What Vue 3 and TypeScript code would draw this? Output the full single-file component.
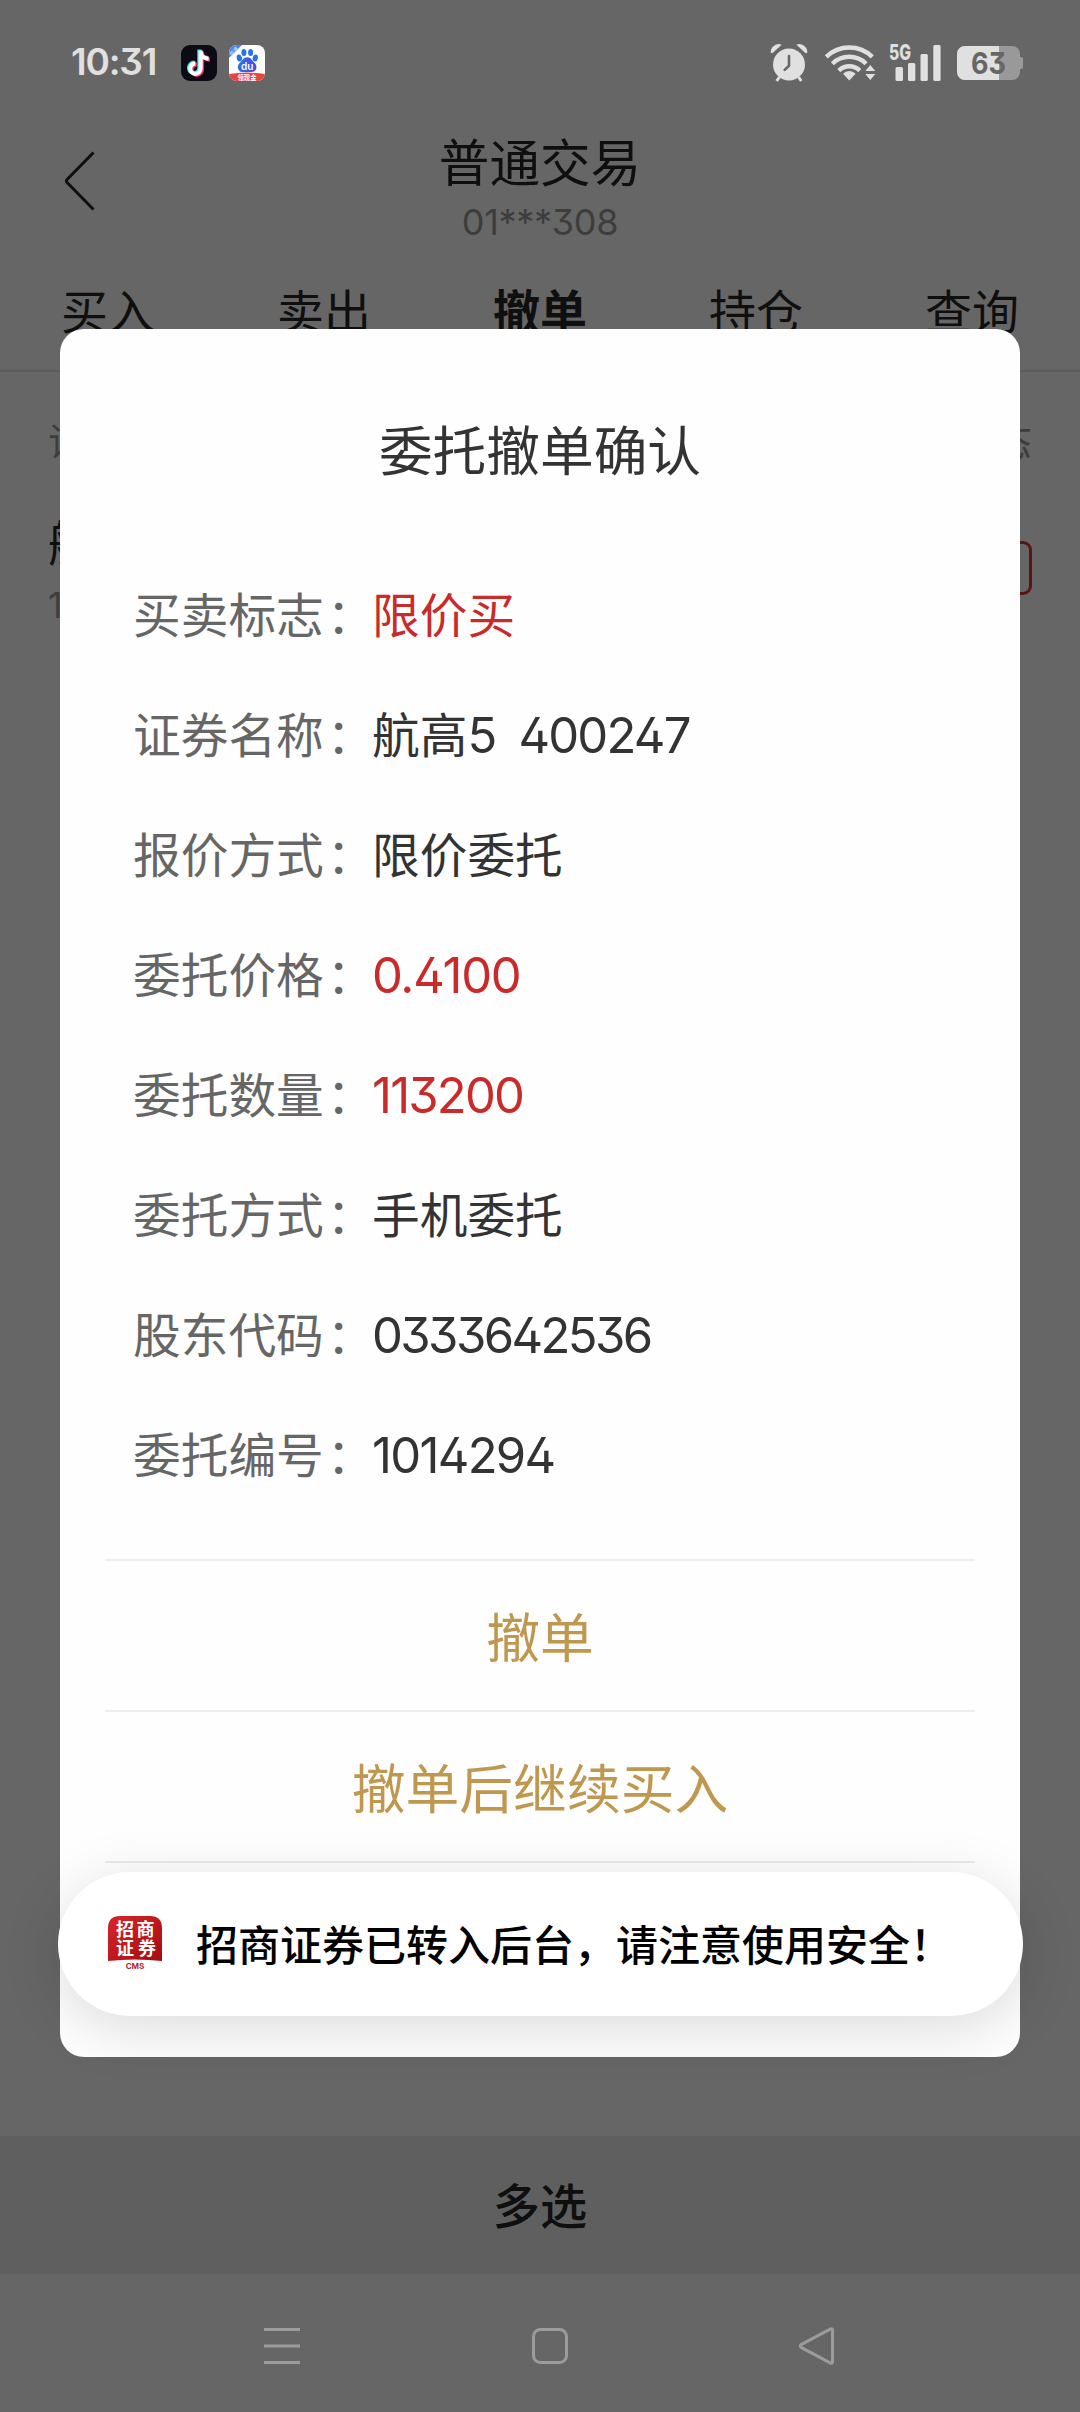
<script setup lang="ts">
interface Part {
  text: string
  // letter spacing in px, set on runs of digits only
  tracking?: number
}
interface Field {
  label: string
  parts: Part[]
  red?: boolean
}

const tabs: string[] = ['买入', '卖出', '撤单', '持仓', '查询']
const activeTab = '撤单'

const fields: Field[] = [
  { label: '买卖标志', parts: [{ text: '限价买' }], red: true },
  { label: '证券名称', parts: [{ text: '航高' }, { text: '5', tracking: -1.8 }, { text: '400247', tracking: -1.8 }] },
  { label: '报价方式', parts: [{ text: '限价委托' }] },
  { label: '委托价格', parts: [{ text: '0.4100', tracking: -1.3 }], red: true },
  { label: '委托数量', parts: [{ text: '113200', tracking: -1.8 }], red: true },
  { label: '委托方式', parts: [{ text: '手机委托' }] },
  { label: '股东代码', parts: [{ text: '0333642536', tracking: -2.6 }] },
  { label: '委托编号', parts: [{ text: '1014294', tracking: -1.7 }] },
]

const actions: string[] = ['撤单', '撤单后继续买入']

const trackingStyle = (p: Part) =>
  p.tracking === undefined ? undefined : { letterSpacing: `${p.tracking}px` }
</script>

<template>
  <div class="screen">
    <header class="status">
      <span class="clock">10:31</span>
      <svg class="app-icon first" viewBox="0 0 36 36">
        <rect width="36" height="36" rx="9" fill="#0b0a15" />
        <g fill="none" stroke-width="4.2">
          <path d="M19.6 5.4v18.2a5.2 5.2 0 1 1-5.2-5.2M19.6 7c.5 4 3.6 6.5 8 6.7" stroke="#25e5e3" transform="translate(-1.2 -.8)" />
          <path d="M19.6 5.4v18.2a5.2 5.2 0 1 1-5.2-5.2M19.6 7c.5 4 3.6 6.5 8 6.7" stroke="#f5325b" transform="translate(1.4 1)" />
          <path d="M19.6 5.4v18.2a5.2 5.2 0 1 1-5.2-5.2M19.6 7c.5 4 3.6 6.5 8 6.7" stroke="#fff" />
        </g>
      </svg>
      <svg class="app-icon second" viewBox="0 0 36 36">
        <defs>
          <clipPath id="tile"><rect width="36" height="36" rx="8" /></clipPath>
          <linearGradient id="paw" x1="0" y1="0" x2="1" y2="0">
            <stop offset="0" stop-color="#2275ea" />
            <stop offset="1" stop-color="#5547dc" />
          </linearGradient>
        </defs>
        <g clip-path="url(#tile)">
          <rect width="36" height="36" fill="#fff" />
          <path d="M0 0h13L0 13z" fill="#4c86e2" />
          <text x="0" y="2" font-size="5" fill="#dbe8ff" text-anchor="middle" transform="translate(4.6 6.2) rotate(-45)">极速</text>
          <g fill="#2673e2">
            <ellipse cx="10.3" cy="13" rx="2.6" ry="3.5" transform="rotate(-12 10.3 13)" />
            <ellipse cx="14.9" cy="7.6" rx="2.5" ry="3.5" />
            <ellipse cx="21.6" cy="7.5" rx="2.5" ry="3.5" />
            <ellipse cx="26.3" cy="13" rx="2.6" ry="3.5" transform="rotate(12 26.3 13)" />
          </g>
          <path d="M18.2 12.3c3.8 0 4.5 3 7 5.2 4.2 3.7 2.2 9.5-2.6 9.5h-8.8c-4.9 0-6.9-5.8-2.6-9.5 2.5-2.2 3.2-5.2 7-5.2z" fill="url(#paw)" />
          <text x="18.2" y="25" font-size="10" font-weight="600" fill="#fff" text-anchor="middle">du</text>
          <path d="M0 29q18-3 36 0v7H0z" fill="#e8443f" />
          <text x="18" y="34.6" font-size="6.3" font-weight="700" fill="#fff" text-anchor="middle">领现金</text>
        </g>
      </svg>
      <div class="sys">
        <svg class="alarm" viewBox="0 0 38 40">
          <g fill="#e0e0e0">
            <circle cx="19" cy="21.5" r="16" />
            <path d="M.8 9.8C0 4.5 6.5-.8 11.6 1.8L2.4 10.2z" />
            <path d="M37.2 9.8C38 4.5 31.5-.8 26.4 1.8l9.2 8.4z" />
          </g>
          <path d="M9.5 34l-2.8 4M28.5 34l2.8 4" stroke="#e0e0e0" stroke-width="3" />
          <path d="M19 13v9.6l-4.3 4.3" fill="none" stroke="#666" stroke-width="2.6" stroke-linecap="round" />
        </svg>
        <svg class="wifi" viewBox="0 0 52 40">
          <g fill="none" stroke="#e0e0e0" stroke-width="4.4">
            <path d="M2.3 13.8a33 33 0 0 1 46 0" />
            <path d="M8.4 20.7a24 24 0 0 1 33.7 0" />
            <path d="M14.8 27.6a15 15 0 0 1 21 0" />
          </g>
          <path d="M25.3 28q3.8 0 6.3 2.7L25.3 37.5 19 30.7Q21.5 28 25.3 28z" fill="#e0e0e0" />
          <path d="M46.3 22l5 6h-10zM46.3 37l5-6h-10z" fill="#e0e0e0" />
        </svg>
        <svg class="signal" viewBox="0 0 54 44">
          <text x="0" y="18.6" font-size="21" font-weight="800" fill="#e0e0e0" textLength="22" lengthAdjust="spacingAndGlyphs">5G</text>
          <g fill="#e0e0e0">
            <rect x="6.5" y="26" width="7.5" height="14" rx="1.5" />
            <rect x="19" y="22" width="7.3" height="18" rx="1.5" />
            <rect x="31.5" y="13" width="7.3" height="27" rx="1.5" />
            <rect x="44.3" y="4" width="7.3" height="36" rx="1.5" />
          </g>
        </svg>
        <svg class="battery" viewBox="0 0 66 34">
          <defs>
            <clipPath id="cell"><rect width="63" height="34" rx="8" /></clipPath>
          </defs>
          <path d="M62 11h2q2 0 2 2v8q0 2-2 2h-2z" fill="#999" />
          <g clip-path="url(#cell)">
            <rect width="63" height="34" fill="#999" />
            <rect width="42" height="34" fill="#e0e0e0" />
          </g>
          <text x="31.5" y="28" font-size="30" font-weight="700" fill="#666" text-anchor="middle" textLength="35" lengthAdjust="spacingAndGlyphs">63</text>
        </svg>
      </div>
    </header>

    <div class="navbar">
      <svg class="back" viewBox="0 0 32 60">
        <path d="M29.5 1.5L3.3 28.2q-1.8 1.8 0 3.6L29.5 58.5" fill="none" stroke="#0f0f0f" stroke-width="3" />
      </svg>
      <div class="heading">
        <div class="title">普通交易</div>
        <div class="account">01***308</div>
      </div>
    </div>

    <nav class="tabs">
      <span v-for="t in tabs" :key="t" class="tab" :class="{ active: t === activeTab }">{{ t }}</span>
    </nav>

    <main class="orders">
      <div class="cols"><span>证</span><span>态</span></div>
      <div class="order">
        <div>
          <div class="stock">航</div>
          <div class="qty">1</div>
        </div>
        <div class="cancel"></div>
      </div>
    </main>

    <div class="multi">多选</div>

    <footer class="keys">
      <svg class="k1" viewBox="0 0 40 40"><path d="M2 3.5h36M2 20h36M2 36.5h36" /></svg>
      <svg class="k2" viewBox="0 0 40 40"><rect x="3.5" y="3.5" width="33" height="33" rx="7" /></svg>
      <svg class="k3" viewBox="0 0 40 40"><path d="M35.5 4.5v31q0 2.5-2.3 1.3L4.5 21.7q-2.7-1.7 0-3.4L33.2 3.2q2.3-1.2 2.3 1.3z" /></svg>
    </footer>

    <section class="dialog">
      <h2>委托撤单确认</h2>
      <div class="fields">
        <div v-for="f in fields" :key="f.label" class="field">
          <span class="label">{{ f.label }}<span class="colon">：</span></span>
          <span class="value" :class="{ red: f.red }">
            <span
              v-for="p in f.parts"
              :key="p.text"
              :class="{ num: p.tracking !== undefined }"
              :style="trackingStyle(p)"
            >{{ p.text }}</span>
          </span>
        </div>
      </div>
      <div class="actions">
        <div v-for="a in actions" :key="a" class="action">{{ a }}</div>
      </div>
    </section>

    <div class="toast">
      <svg class="logo" viewBox="0 0 54 56">
        <defs>
          <linearGradient id="seal" x1="0" y1="0" x2="1" y2="1">
            <stop offset="0" stop-color="#d8262a" />
            <stop offset="1" stop-color="#a30c10" />
          </linearGradient>
        </defs>
        <path d="M0 12Q0 0 12 0h30q12 0 12 12v33q-27-3-54 0z" fill="url(#seal)" />
        <g fill="#fff" font-size="18" font-weight="700" text-anchor="middle">
          <text x="17" y="19.5">招</text>
          <text x="37.5" y="19.5">商</text>
          <text x="17" y="39">证</text>
          <text x="39" y="39">券</text>
        </g>
        <text x="27" y="52.5" font-size="8" font-weight="700" fill="#b3282c" text-anchor="middle">CMS</text>
      </svg>
      <span class="message">招商证券已转入后台，请注意使用安全！</span>
    </div>
  </div>
</template>

<style>
body {
  background: #666;
}
</style>

<style scoped>
.screen {
  position: relative;
  display: flex;
  flex-direction: column;
  width: 1080px;
  height: 2412px;
  overflow: hidden;
  background: #666;
  color: #0f0f0f;
  font-family: Inter, 'Noto Sans CJK SC', sans-serif;
  font-feature-settings: 'cv02', 'cv09';
}
svg {
  display: block;
  flex: none;
}
.status {
  display: flex;
  align-items: center;
  height: 126px;
  padding: 0 57px 0 71px;
  box-sizing: border-box;
}
.clock {
  width: 110px;
  margin-bottom: 2px;
  font-size: 37px;
  font-weight: 600;
  line-height: 44px;
  letter-spacing: -1.2px;
  color: #e0e0e0;
}
.app-icon {
  width: 36px;
  height: 36px;
}
.second {
  margin-left: 12px;
}
.sys {
  display: flex;
  align-items: center;
  margin-left: auto;
}
.alarm {
  width: 38px;
  height: 40px;
}
.wifi {
  width: 52px;
  height: 40px;
  margin-left: 16px;
}
.signal {
  width: 54px;
  height: 44px;
  margin-left: 13px;
}
.battery {
  width: 66px;
  height: 34px;
  margin-left: 14px;
}
.navbar {
  display: flex;
  height: 126px;
  padding: 0 64px;
}
.back {
  width: 32px;
  height: 60px;
  margin-top: 25px;
}
.heading {
  flex: 1;
  margin-right: 32px;
  text-align: center;
}
.title {
  margin-top: 5px;
  font-size: 50.6px;
  line-height: 66px;
}
.account {
  margin-top: 3px;
  font-size: 36px;
  line-height: 44px;
  letter-spacing: -0.3px;
  color: #3d3d3d;
}
.tabs {
  display: flex;
  height: 118px;
  border-bottom: 2px solid #5b5b5b;
}
.tab {
  flex: 1;
  padding-top: 30px;
  text-align: center;
  font-size: 47px;
  line-height: 60px;
}
.active {
  font-weight: 700;
}
.orders {
  flex: 1;
  padding: 0 48px;
}
.cols {
  display: flex;
  justify-content: space-between;
  padding-top: 46px;
  font-size: 39px;
  line-height: 48px;
  color: #3d3d3d;
}
.order {
  display: flex;
  justify-content: space-between;
  padding-top: 46px;
}
.stock {
  padding-top: 2px;
  font-size: 48px;
  line-height: 60px;
}
.qty {
  margin-top: 9px;
  font-size: 36px;
  line-height: 44px;
  color: #3d3d3d;
}
.cancel {
  width: 120px;
  height: 48px;
  margin-top: 29px;
  border: 3px solid #5a1414;
  border-radius: 9px;
}
.multi {
  height: 138px;
  background: #5f5f5f;
  text-align: center;
  font-size: 47.2px;
  font-weight: 500;
  line-height: 142px;
}
.keys {
  display: flex;
  height: 138px;
  padding: 52px 0 0 262px;
  box-sizing: border-box;
}
.keys svg {
  width: 40px;
  height: 40px;
  fill: none;
  stroke: #9c9c9c;
  stroke-width: 3px;
}
.k2 {
  margin-left: 228px;
}
.k3 {
  margin-left: 227px;
}
.dialog {
  position: absolute;
  left: 60px;
  top: 329px;
  width: 960px;
  height: 1728px;
  border-radius: 24px;
  background: #fefefe;
  box-sizing: border-box;
  padding: 83px 45px 0;
}
h2 {
  margin: 0;
  text-align: center;
  font-size: 53.7px;
  font-weight: 400;
  line-height: 80px;
  color: #333;
}
.fields {
  padding: 64px 0 0 28px;
}
.field {
  display: flex;
  align-items: center;
  height: 120px;
  font-size: 47.7px;
  line-height: 60px;
  white-space: nowrap;
}
.label {
  flex: none;
  width: 239px;
  color: #666;
}
.colon {
  margin-left: 3px;
}
.value {
  display: flex;
  align-items: baseline;
  color: #333;
}
.num {
  font-size: 49px;
}
.num + .num {
  margin-left: 23px;
}
.red {
  color: #c92a2a;
}
.actions {
  margin-top: 43px;
  border-bottom: 2px solid #ebebeb;
}
.action {
  height: 149px;
  border-top: 2px solid #ededed;
  text-align: center;
  font-size: 53.8px;
  line-height: 155px;
  color: #c0974f;
}
.toast {
  position: absolute;
  left: 58px;
  top: 1872px;
  display: flex;
  align-items: center;
  width: 965px;
  height: 144px;
  padding-left: 50px;
  box-sizing: border-box;
  border-radius: 72px;
  background: #fff;
  box-shadow: 0 12px 60px rgba(0, 0, 0, 0.14);
  color: #000;
  font-size: 42px;
  font-weight: 500;
  line-height: 60px;
  white-space: nowrap;
}
.logo {
  width: 54px;
  height: 56px;
  margin-right: 34px;
}
.message {
  padding-top: 3px;
}
</style>
